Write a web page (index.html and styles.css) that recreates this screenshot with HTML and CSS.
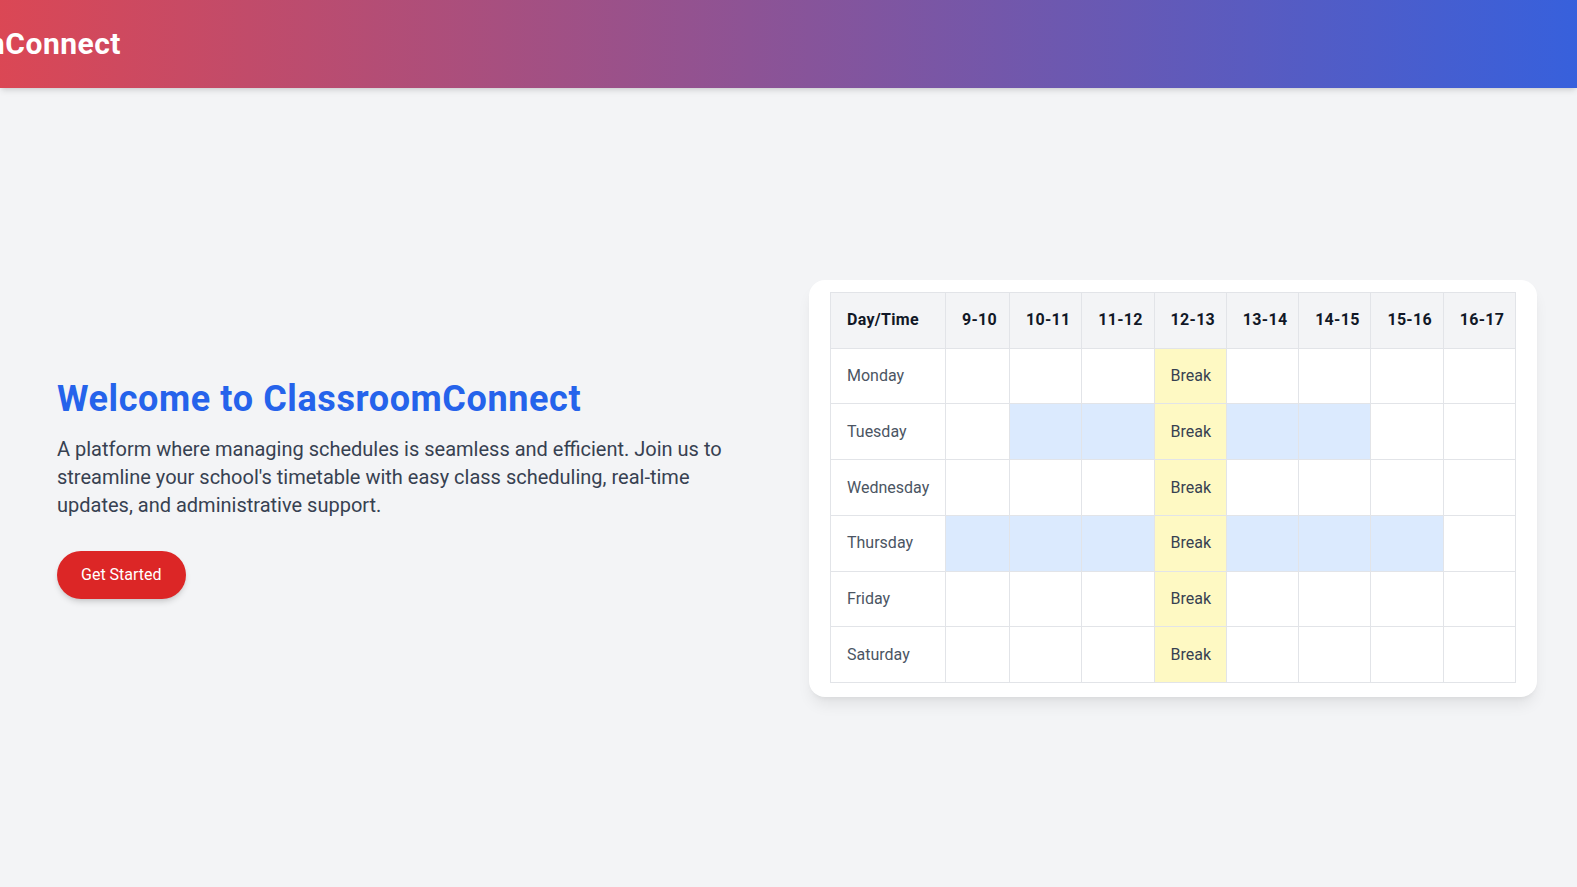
FILE: index.html
```html
<!DOCTYPE html>
<html lang="en">
<head>
<meta charset="utf-8">
<title>ClassroomConnect</title>
<link rel="stylesheet" href="styles.css">
</head>
<body>
<header class="topbar">
  <div class="brand-clip"><span class="brand">ClassroomConnect</span></div>
</header>
<main class="hero">
  <div class="hero-grid">
    <section class="intro">
      <h1 class="title">Welcome to ClassroomConnect</h1>
      <p class="lead">A platform where managing schedules is seamless and efficient. Join us to streamline your school's timetable with easy class scheduling, real-time updates, and administrative support.</p>
      <button class="cta">Get Started</button>
    </section>
    <section class="card">
      <table class="timetable">
        <colgroup>
          <col class="col-day"><col class="col-first"><col><col><col><col><col><col><col>
        </colgroup>
        <thead>
          <tr>
            <th class="th-day">Day/Time</th><th>9-10</th><th>10-11</th><th>11-12</th><th>12-13</th><th>13-14</th><th>14-15</th><th>15-16</th><th>16-17</th>
          </tr>
        </thead>
        <tbody>
          <tr><td class="day">Monday</td><td></td><td></td><td></td><td class="break">Break</td><td></td><td></td><td></td><td></td></tr>
          <tr><td class="day">Tuesday</td><td></td><td class="busy"></td><td class="busy"></td><td class="break">Break</td><td class="busy"></td><td class="busy"></td><td></td><td></td></tr>
          <tr><td class="day">Wednesday</td><td></td><td></td><td></td><td class="break">Break</td><td></td><td></td><td></td><td></td></tr>
          <tr><td class="day">Thursday</td><td class="busy"></td><td class="busy"></td><td class="busy"></td><td class="break">Break</td><td class="busy"></td><td class="busy"></td><td class="busy"></td><td></td></tr>
          <tr><td class="day">Friday</td><td></td><td></td><td></td><td class="break">Break</td><td></td><td></td><td></td><td></td></tr>
          <tr><td class="day">Saturday</td><td></td><td></td><td></td><td class="break">Break</td><td></td><td></td><td></td><td></td></tr>
        </tbody>
      </table>
    </section>
  </div>
</main>
</body>
</html>
```
FILE: styles.css
```css
* { box-sizing: border-box; }

html, body {
  margin: 0;
  padding: 0;
}

body {
  background: #f3f4f6;
  font-family: Roboto, "Liberation Sans", Arial, sans-serif;
  color: #374151;
  height: 887px;
  overflow: hidden;
  display: flex;
  flex-direction: column;
}

.topbar {
  height: 88px;
  flex: 0 0 88px;
  display: flex;
  align-items: center;
  background: linear-gradient(90deg, #ef4444 -12.3%, #2563eb 111.1%);
  box-shadow: 0 4px 6px -1px rgba(0,0,0,0.1), 0 2px 4px -2px rgba(0,0,0,0.1);
  position: relative;
  z-index: 1;
}

.brand-clip {
  width: 121px;
  overflow: hidden;
  display: flex;
  justify-content: flex-end;
  white-space: nowrap;
}

.brand {
  color: #ffffff;
  font-size: 30px;
  line-height: 36px;
  font-weight: 700;
  letter-spacing: 0.5px;
  flex: none;
}

.hero {
  flex: 1;
  display: flex;
  align-items: center;
  padding: 2px 40px 0 57px;
}

.hero-grid {
  width: 100%;
  display: grid;
  grid-template-columns: 1fr 1fr;
  column-gap: 24px;
  align-items: center;
}

.intro {
  padding-right: 32px;
}

.title {
  margin: 0 0 16px;
  color: #2563eb;
  font-size: 36px;
  line-height: 40px;
  font-weight: 700;
  letter-spacing: 0.6px;
}

.lead {
  margin: 0 0 32px;
  font-size: 20px;
  line-height: 28px;
  color: #374151;
}

.cta {
  display: inline-block;
  border: 0;
  background: #dc2626;
  color: #ffffff;
  font-family: inherit;
  font-size: 16px;
  line-height: 24px;
  padding: 12px 24px;
  border-radius: 9999px;
  box-shadow: 0 4px 6px -1px rgba(0,0,0,0.15), 0 2px 4px -2px rgba(0,0,0,0.1);
  cursor: pointer;
}

.card {
  background: #ffffff;
  border-radius: 16px;
  padding: 12px 21px 14px;
  box-shadow: 0 10px 15px -3px rgba(0,0,0,0.08), 0 4px 6px -4px rgba(0,0,0,0.08);
}

.timetable {
  width: 100%;
  table-layout: fixed;
  border-collapse: collapse;
  font-size: 16px;
  line-height: 24px;
}

.col-day { width: 115px; }
.col-first { width: 64px; }

.timetable th,
.timetable td {
  border: 1px solid #e2e4e8;
  padding: 15.4px 16px;
  text-align: center;
  white-space: nowrap;
}

.timetable th {
  background: #f3f4f6;
  color: #111827;
  font-weight: 700;
  letter-spacing: 0.3px;
}

.timetable th.th-day {
  text-align: left;
}

.timetable td.day {
  text-align: left;
  color: #4b5563;
}

.timetable td.break {
  background: #fef9c3;
  color: #374151;
}

.timetable td.busy {
  background: #dbeafe;
}
```
